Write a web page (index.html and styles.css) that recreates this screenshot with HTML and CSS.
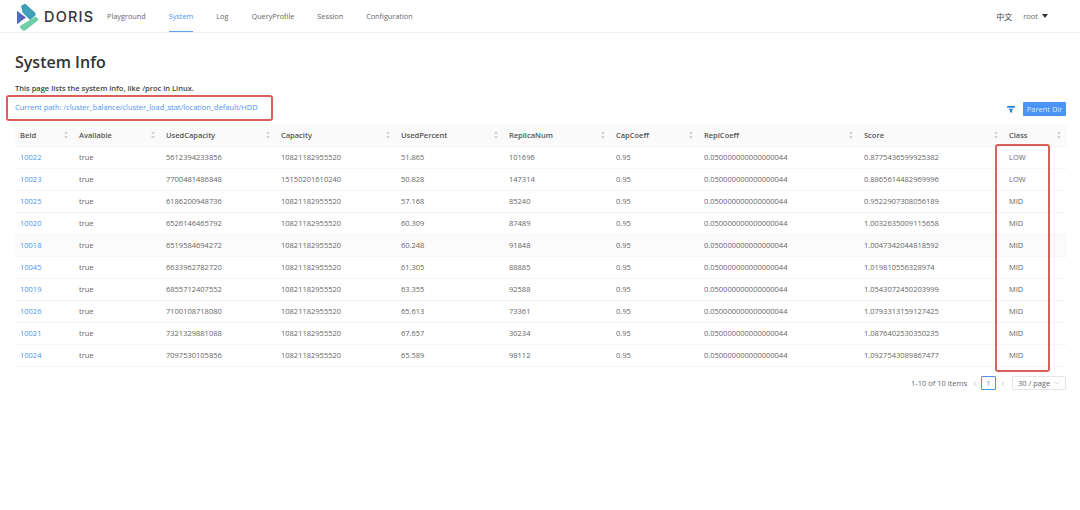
FILE: index.html
```html
<!DOCTYPE html>
<html lang="en">
<head>
<meta charset="utf-8">
<title>Doris System Info</title>
<link rel="stylesheet" href="styles.css">
</head>
<body>
<header class="topbar">
  <div class="logo">
    <svg class="logo-mark" viewBox="0 0 22 28" width="22" height="28" aria-hidden="true">
      <polygon points="5,3 9,0.5 19.5,10 19.5,12.5 14,17 6.5,9.5" fill="#3f9fb8"/>
      <polygon points="1,8 1,21 10,14.5" fill="#5b5fc0"/>
      <polygon points="1,8 5,11 5,18 1,21" fill="#4a6fc4"/>
      <polygon points="19.5,13.5 22,15.5 22,17.5 9,27.5 6.5,27.5 4,24.5 4,23" fill="#6fd0a8"/>
    </svg>
    <span class="logo-text">DORIS</span>
  </div>
  <nav class="nav">
    <a class="nav-item">Playground</a>
    <a class="nav-item active">System</a>
    <a class="nav-item">Log</a>
    <a class="nav-item">QueryProfile</a>
    <a class="nav-item">Session</a>
    <a class="nav-item">Configuration</a>
  </nav>
  <div class="user">
    <span class="lang">中文</span>
    <span class="root">root</span>
    <span class="caret"></span>
  </div>
</header>
<main class="main">
  <h1 class="title">System Info</h1>
  <p class="desc">This page lists the system info, like /proc in Linux.</p>
  <div class="pathbar">
    <a class="path">Current path: /cluster_balance/cluster_load_stat/location_default/HDD</a>
    <span class="redbox path-box"></span>
    <div class="actions">
      <svg class="filter" viewBox="0 0 10 9" width="8" height="7" aria-hidden="true"><path d="M0 0h10v2.2H0zM1.6 3.4h6.8L6.3 5.8V9L3.7 7.8V5.8z" fill="#2a86dc"/></svg>
      <button class="btn">Parent Dir</button>
    </div>
  </div>
  <div class="table-wrap">
    <table class="table">
      <colgroup>
        <col class="c1"><col class="c2"><col class="c3"><col class="c4"><col class="c5">
        <col class="c6"><col class="c7"><col class="c8"><col class="c9"><col class="c10">
      </colgroup>
      <thead>
        <tr>
          <th><div class="th">BeId<span class="sort"></span></div></th>
          <th><div class="th">Available<span class="sort"></span></div></th>
          <th><div class="th">UsedCapacity<span class="sort"></span></div></th>
          <th><div class="th">Capacity<span class="sort"></span></div></th>
          <th><div class="th">UsedPercent<span class="sort"></span></div></th>
          <th><div class="th">ReplicaNum<span class="sort"></span></div></th>
          <th><div class="th">CapCoeff<span class="sort"></span></div></th>
          <th><div class="th">ReplCoeff<span class="sort"></span></div></th>
          <th><div class="th">Score<span class="sort"></span></div></th>
          <th><div class="th">Class<span class="sort"></span></div></th>
        </tr>
      </thead>
      <tbody>
        <tr><td class="link">10022</td><td>true</td><td>5612394233856</td><td>10821182955520</td><td>51.865</td><td>101696</td><td>0.95</td><td>0.050000000000000044</td><td>0.8775436599925382</td><td>LOW</td></tr>
        <tr><td class="link">10023</td><td>true</td><td>7700481486848</td><td>15150201610240</td><td>50.828</td><td>147314</td><td>0.95</td><td>0.050000000000000044</td><td>0.8865614482969996</td><td>LOW</td></tr>
        <tr><td class="link">10025</td><td>true</td><td>6186200948736</td><td>10821182955520</td><td>57.168</td><td>85240</td><td>0.95</td><td>0.050000000000000044</td><td>0.9522907308056189</td><td>MID</td></tr>
        <tr><td class="link">10020</td><td>true</td><td>6526146465792</td><td>10821182955520</td><td>60.309</td><td>87489</td><td>0.95</td><td>0.050000000000000044</td><td>1.0032635009115658</td><td>MID</td></tr>
        <tr class="hover"><td class="link">10018</td><td>true</td><td>6519584694272</td><td>10821182955520</td><td>60.248</td><td>91848</td><td>0.95</td><td>0.050000000000000044</td><td>1.0047342044818592</td><td>MID</td></tr>
        <tr><td class="link">10045</td><td>true</td><td>6633962782720</td><td>10821182955520</td><td>61.305</td><td>88885</td><td>0.95</td><td>0.050000000000000044</td><td>1.019810556328974</td><td>MID</td></tr>
        <tr><td class="link">10019</td><td>true</td><td>6855712407552</td><td>10821182955520</td><td>63.355</td><td>92588</td><td>0.95</td><td>0.050000000000000044</td><td>1.0543072450203999</td><td>MID</td></tr>
        <tr><td class="link">10026</td><td>true</td><td>7100108718080</td><td>10821182955520</td><td>65.613</td><td>73361</td><td>0.95</td><td>0.050000000000000044</td><td>1.0793313159127425</td><td>MID</td></tr>
        <tr><td class="link">10021</td><td>true</td><td>7321329881088</td><td>10821182955520</td><td>67.657</td><td>30234</td><td>0.95</td><td>0.050000000000000044</td><td>1.0876402530350235</td><td>MID</td></tr>
        <tr><td class="link">10024</td><td>true</td><td>7097530105856</td><td>10821182955520</td><td>65.589</td><td>98112</td><td>0.95</td><td>0.050000000000000044</td><td>1.0927543089867477</td><td>MID</td></tr>
      </tbody>
    </table>
    <span class="redbox class-box"></span>
  </div>
  <div class="pagination">
    <span class="total">1-10 of 10 items</span>
    <span class="chev">‹</span>
    <span class="page">1</span>
    <span class="chev">›</span>
    <span class="size">30 / page<svg class="size-arrow" viewBox="0 0 8 5" width="6" height="4" aria-hidden="true"><path d="M0.5 0.5L4 4L7.5 0.5" fill="none" stroke="#c4c4c4" stroke-width="0.8"/></svg></span>
  </div>
</main>
</body>
</html>
```

FILE: styles.css
```css
* { box-sizing: border-box; }
html, body { margin: 0; padding: 0; background: #fff; }
body {
  width: 1080px;
  height: 510px;
  overflow: hidden;
  font-family: "Open Sans", "Noto Sans CJK SC", sans-serif;
  font-size: 7.5px;
  color: #666;
}
.topbar {
  display: flex;
  align-items: center;
  height: 33px;
  border-bottom: 1px solid #f0f0f0;
  padding-left: 16px;
  padding-right: 32px;
}
.logo { display: flex; align-items: center; width: 90px; height: 32px; }
.logo-mark { flex: none; margin-top: 1px; }
.logo-text {
  margin-left: 6px;
  font-family: "Inter", sans-serif;
  font-size: 14.5px;
  font-weight: 500;
  letter-spacing: 1.2px;
  color: #33333b;
}
.nav { display: flex; height: 32px; gap: 23px; margin-left: 1px; }
.nav-item {
  display: flex;
  align-items: center;
  height: 32px;
  color: #666;
  font-size: 7.3px;
  border-bottom: 1px solid transparent;
}
.nav-item.active { color: #4a94f0; border-bottom-color: #5aa0ee; }
.user { margin-left: auto; display: flex; align-items: center; }
.lang { color: #444; font-size: 8px; margin-right: 11px; }
.root { color: #666; }
.caret {
  margin-left: 4px;
  border-left: 3px solid transparent;
  border-right: 3px solid transparent;
  border-top: 4px solid #333;
}
.main { padding: 0 13px 0 15px; }
.title {
  margin: 18px 0 0;
  font-size: 16px;
  line-height: 22px;
  font-weight: 600;
  color: #333;
}
.desc {
  margin: 9px 0 0;
  line-height: 12px;
  font-weight: 600;
  color: #444;
}
.pathbar {
  position: relative;
  display: flex;
  align-items: center;
  justify-content: space-between;
  height: 14px;
  margin-top: 6px;
}
.path { color: #4a94f0; font-size: 7.45px; }
.actions { display: flex; align-items: center; gap: 8px; margin-top: 4px; padding-right: 1px; }
.btn {
  width: 43px;
  height: 14px;
  padding: 0;
  border: 0;
  border-radius: 1px;
  background: #4a94f5;
  color: #d8e8fb;
  font-family: inherit;
  font-size: 7.5px;
  line-height: 14px;
}
.redbox {
  position: absolute;
  border: 2px solid #d9605a;
  border-radius: 3px;
  pointer-events: none;
}
.path-box { left: -9px; top: -5px; width: 267px; height: 26px; }
.table-wrap { position: relative; margin-top: 10px; }
.table {
  width: 1052px;
  table-layout: fixed;
  border-collapse: collapse;
}
.c1 { width: 59px; } .c2 { width: 87px; } .c3 { width: 115px; } .c4 { width: 120px; }
.c5 { width: 108px; } .c6 { width: 107px; } .c7 { width: 88px; } .c8 { width: 160px; }
.c9 { width: 145px; } .c10 { width: 63px; }
th {
  height: 22px;
  padding: 0 5px;
  background: #fafafa;
  text-align: left;
  font-weight: 600;
  color: #555;
  border-bottom: 1px solid #f4f4f4;
}
.th { display: flex; align-items: center; justify-content: space-between; }
.sort { position: relative; width: 4px; height: 8px; margin-right: 1px; }
.sort::before, .sort::after {
  content: "";
  position: absolute;
  left: 0;
  border-left: 2px solid transparent;
  border-right: 2px solid transparent;
}
.sort::before { top: 0; border-bottom: 3px solid #d4d4d4; }
.sort::after { bottom: 0; border-top: 3px solid #d4d4d4; }
td {
  height: 22px;
  padding: 0 5px;
  color: #666;
  border-bottom: 1px solid #f6f6f6;
  white-space: nowrap;
}
td.link { color: #4a94f0; }
tr.hover td { background: #fbfbfb; }
.class-box { left: 980px; top: 20px; width: 55px; height: 228px; }
.pagination {
  display: flex;
  align-items: center;
  justify-content: flex-end;
  height: 14px;
  margin-top: 9px;
  padding-right: 1px;
}
.total { margin-right: 3px; }
.chev { width: 9px; text-align: center; color: #c4c4c4; font-size: 9px; line-height: 14px; }
.page {
  width: 15px;
  height: 14px;
  margin: 0 2px;
  border: 1px solid #4a94f0;
  border-radius: 1px;
  color: #4a94f0;
  text-align: center;
  line-height: 12px;
}
.size {
  display: flex;
  align-items: center;
  justify-content: space-between;
  width: 54px;
  height: 14px;
  margin-left: 5px;
  padding: 0 5px;
  border: 1px solid #e6e6e6;
  border-radius: 1px;
}
```
